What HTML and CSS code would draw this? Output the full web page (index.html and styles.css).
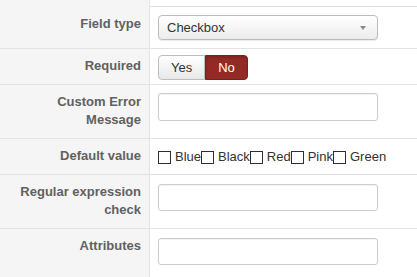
FILE: index.html
```html
<!DOCTYPE html>
<html lang="en">
<head>
<meta charset="utf-8">
<title>Field options</title>
<link rel="stylesheet" href="styles.css">
</head>
<body>
<div class="form">
  <div class="row row-top"><div class="label"></div><div class="controls"></div></div>
  <div class="row">
    <div class="label">Field type</div>
    <div class="controls">
      <div class="select"><span>Checkbox</span><span class="caret"></span></div>
    </div>
  </div>
  <div class="row">
    <div class="label">Required</div>
    <div class="controls">
      <div class="btn-group"><span class="btn">Yes</span><span class="btn btn-no">No</span></div>
    </div>
  </div>
  <div class="row">
    <div class="label">Custom Error Message</div>
    <div class="controls"><input class="text" type="text"></div>
  </div>
  <div class="row">
    <div class="label">Default value</div>
    <div class="controls checks">
      <label class="check"><input type="checkbox">Blue</label><label class="check"><input type="checkbox">Black</label><label class="check"><input type="checkbox">Red</label><label class="check"><input type="checkbox">Pink</label><label class="check"><input type="checkbox">Green</label>
    </div>
  </div>
  <div class="row">
    <div class="label">Regular expression check</div>
    <div class="controls"><input class="text low" type="text"></div>
  </div>
  <div class="row row-last">
    <div class="label">Attributes</div>
    <div class="controls"><input class="text low" type="text"></div>
  </div>
</div>
</body>
</html>
```

FILE: styles.css
```css
html, body {
  margin: 0;
  padding: 0;
  height: 100%;
}
body {
  font-family: "Liberation Sans", Arial, sans-serif;
  font-size: 13px;
  color: #333;
  background: #fff;
}
.form {
  display: flex;
  flex-direction: column;
  min-height: 100vh;
}
.row {
  display: grid;
  grid-template-columns: 150px 1fr;
  border-bottom: 1px solid #e2e2e2;
}
.row-top {
  height: 6px;
}
.row-last {
  flex: 1;
  border-bottom: 0;
}
.label {
  box-sizing: border-box;
  background: #f5f5f5;
  border-right: 1px solid #e4e4e4;
  padding: 8px 8px 9px 8px;
  text-align: right;
  font-weight: bold;
  line-height: 18px;
  color: #616161;
}
.row-top .label {
  padding: 0;
}
.controls {
  padding: 8px 8px 0 8px;
}
.select {
  box-sizing: border-box;
  width: 220px;
  height: 25px;
  margin-bottom: 8px;
  padding: 0 11px 0 8px;
  display: flex;
  align-items: center;
  justify-content: space-between;
  border: 1px solid #bcbcbc;
  border-radius: 4px;
  background: linear-gradient(#ffffff, #ececec);
  box-shadow: 0 1px 1px rgba(0,0,0,0.08);
  color: #333;
}
.caret {
  width: 0;
  height: 0;
  border-left: 3px solid transparent;
  border-right: 3px solid transparent;
  border-top: 4px solid #8a8a8a;
}
.btn-group {
  display: inline-flex;
  margin-top: -2px;
}
.btn {
  box-sizing: border-box;
  height: 25px;
  line-height: 23px;
  padding: 0 12px;
  border: 1px solid #bdbdbd;
  background: linear-gradient(#ffffff, #e8e8e8);
  color: #333;
  border-radius: 4px 0 0 4px;
}
.btn-no {
  background: #942a25;
  border-color: #7d211d;
  color: #fff;
  border-radius: 0 4px 4px 0;
  box-shadow: inset 0 2px 3px rgba(0,0,0,0.15);
}
.text {
  box-sizing: border-box;
  display: block;
  width: 220px;
  height: 28px;
  margin: 0;
  border: 1px solid #cccccc;
  border-radius: 3px;
  box-shadow: inset 0 1px 1px rgba(0,0,0,0.06);
  background: #fff;
}
.text.low {
  height: 27px;
  margin-top: 1px;
}
.checks {
  line-height: 18px;
  padding-top: 9px;
  white-space: nowrap;
}
.check {
  color: #333;
}
.check input {
  -webkit-appearance: none;
  appearance: none;
  box-sizing: border-box;
  width: 13px;
  height: 13px;
  margin: 0 4px 0 0;
  border: 1px solid #2f2f2f;
  background: #fff;
  vertical-align: -3px;
}
```
